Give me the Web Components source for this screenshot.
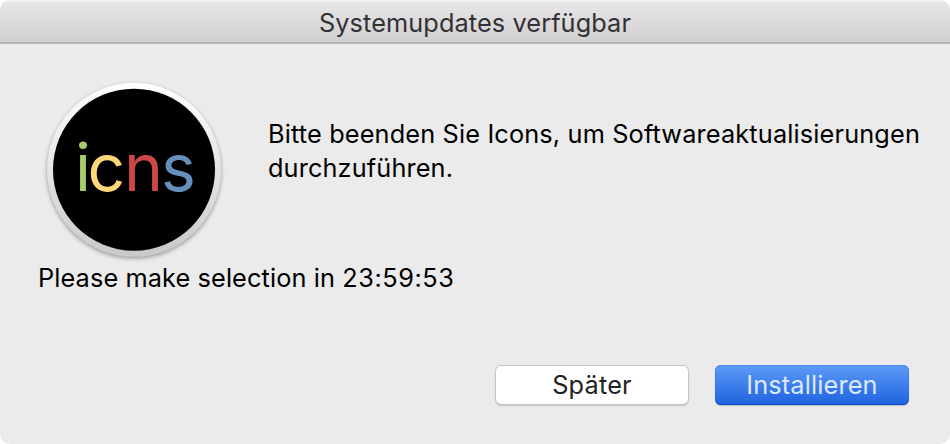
<!DOCTYPE html>
<html lang="de">
<head>
<meta charset="utf-8">
<title>Systemupdates verfügbar</title>
<style>
html, body { margin: 0; background: #fff; }
body { font-family: Inter, "Liberation Sans", sans-serif; font-size: 25.3px; color: #000; }
</style>
</head>
<body>
<update-dialog>
  <title-bar slot="title">Systemupdates verfügbar</title-bar>
  <app-icon slot="icon"></app-icon>
  <text-line slot="message" style="--track:.15px">Bitte beenden Sie Icons, um Softwareaktualisierungen</text-line>
  <text-line slot="message" style="--track:.13px">durchzuführen.</text-line>
  <text-line slot="timer" style="--track:.11px">Please make selection in <span style="letter-spacing:.55px">23:59:53</span></text-line>
  <push-button slot="actions">Später</push-button>
  <push-button slot="actions" primary>Installieren</push-button>
</update-dialog>
<script>
function define(name, html) {
  const template = document.createElement('template');
  template.innerHTML = html;
  customElements.define(name, class extends HTMLElement {
    constructor() {
      super();
      this.attachShadow({ mode: 'open' }).append(template.content.cloneNode(true));
    }
  });
}

define('update-dialog', `
<style>
:host { display: flex; flex-direction: column; box-sizing: border-box; width: 950px; height: 444px; border-radius: 10px; overflow: hidden; background: #ebebeb; }
.top { display: flex; height: 217px; }
.icon { width: 268px; }
.message { padding-top: 73px; }
.timer { padding-left: 38px; height: 34px; }
.actions { display: flex; gap: 26px; justify-content: flex-end; margin-top: 70px; padding-right: 41px; }
</style>
<slot name="title"></slot>
<div class="top">
  <div class="icon"><slot name="icon"></slot></div>
  <div class="message"><slot name="message"></slot></div>
</div>
<div class="timer"><slot name="timer"></slot></div>
<div class="actions"><slot name="actions"></slot></div>
`);

define('title-bar', `
<style>
:host { display: flex; justify-content: center; box-sizing: border-box; height: 44px; line-height: 45px; flex: none; color: #333134; letter-spacing: .1px;
  background: linear-gradient(#f5f4f5 0 1px, #e8e6e8 2px, #d1cfd1 42px, #b1afb1 42px 43px, #b9b8b9 43px); }
</style>
<span><slot></slot></span>
`);

define('text-line', `
<style>
:host { display: block; height: 34px; line-height: 34px; white-space: nowrap; letter-spacing: var(--track); }
</style>
<slot></slot>
`);

define('push-button', `
<style>
:host { display: block; box-sizing: border-box; width: 194px; height: 40px; line-height: 40px; text-align: center; letter-spacing: .2px; border-radius: 6px; color: #222; background: #fff; box-shadow: inset 0 0 0 1px #c6c6c6, inset 0 -1px #b4b4b4, 0 1px 1px #c8c8c8; }
:host([primary]) { color: #dde9fc; font-weight: 400; letter-spacing: .15px; background: linear-gradient(#5e9bf8, #1e62de);
  box-shadow: inset 0 1px #4488f4, inset 0 -1px #0c48c2, inset 1px 0 #2f70e860, inset -1px 0 #2f70e860, 0 1px 1px #b9c0cc; }
</style>
<slot></slot>
`);

define('app-icon', `
<style>
:host { display: block; padding: 29px 0 0 37px; }
svg { display: block; overflow: visible; }
text { font: 400 66px Inter, "Liberation Sans", sans-serif; }
.i { letter-spacing: -3.4px; }
.c { letter-spacing: -1.2px; }
.n { letter-spacing: -2.2px; }
</style>
<svg width="194" height="194" viewBox="37 73 194 194">
  <defs>
    <linearGradient id="rim" x1="0" y1="0" x2="0" y2="1">
      <stop offset="0" stop-color="#fff"/><stop offset="1" stop-color="#c9c9c9"/>
    </linearGradient>
    <filter id="soft" x="-10%" y="-10%" width="120%" height="120%"><feGaussianBlur stdDeviation="2"/></filter>
  </defs>
  <circle cx="134" cy="171.5" r="87" fill="#000" opacity=".35" filter="url(#soft)"/>
  <circle cx="134" cy="169.8" r="87" fill="url(#rim)"/>
  <circle cx="134" cy="169.7" r="81" fill="#000"/>
  <text x="75" y="190.5"><tspan class="i" fill="#aacb6a">i</tspan><tspan class="c" fill="#fdd779">c</tspan><tspan class="n" fill="#cb4846">n</tspan><tspan fill="#6690bc">s</tspan></text>
</svg>
`);
</script>
</body>
</html>
